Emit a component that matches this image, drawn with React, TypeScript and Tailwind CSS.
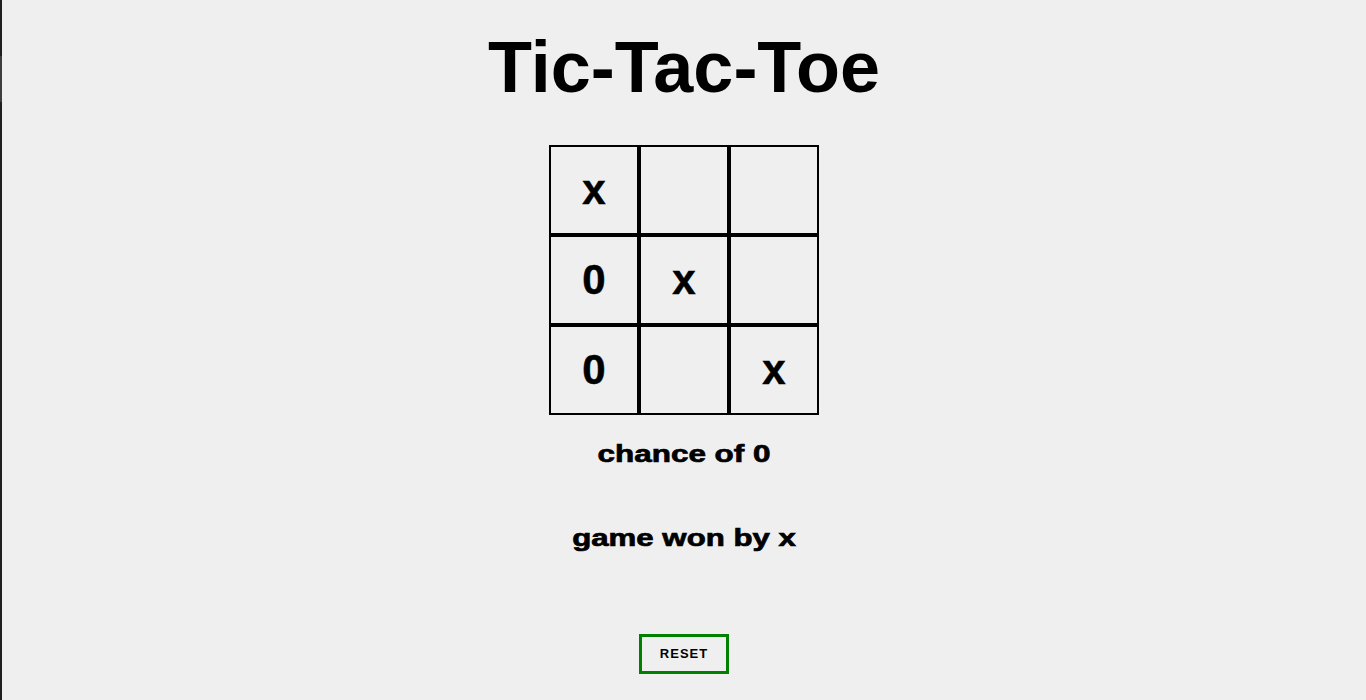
import { useState } from 'react';

type Mark = 'x' | '0' | '';

const initialBoard: Mark[] = ['x', '', '', '0', 'x', '', '0', '', 'x'];

export default function App() {
  const [board, setBoard] = useState<Mark[]>(initialBoard);

  const reset = () => setBoard(Array(9).fill('') as Mark[]);

  return (
    <div className="flex min-h-screen bg-[#efefef] font-['Liberation_Sans',Arial,sans-serif] text-black">
      {/* window edge */}
      <div className="flex w-[2px] shrink-0 flex-col bg-[#1f1f1f]">
        <div className="h-[56px]" />
        <div className="h-[46px] bg-[#3d3d3d]" />
      </div>

      <div className="flex flex-1 flex-col items-center">
        <h1 className="mt-[26px] text-[72px] font-bold leading-[83px]">Tic-Tac-Toe</h1>

        {/* Board */}
        <div className="mt-[36px] grid w-[270px] grid-cols-3">
          {board.map((cell, i) => (
            <button
              key={i}
              className="flex h-[90px] w-[90px] items-center justify-center border-2 border-black text-[42px] font-bold leading-none [-webkit-text-stroke:0.5px_black]"
            >
              {cell}
            </button>
          ))}
        </div>

        <h3 className="mt-[25px] text-[24px] font-bold leading-[28px] [-webkit-text-stroke:0.7px_black]">
          <span className="inline-block scale-x-[1.31]">chance of 0</span>
        </h3>

        <h3 className="mt-[56px] text-[24px] font-bold leading-[28px] [-webkit-text-stroke:0.7px_black]">
          <span className="inline-block scale-x-[1.3]">game won by x</span>
        </h3>

        <button
          onClick={reset}
          className="mt-[82px] h-[40px] w-[90px] border-[3px] border-[#008000] text-[13px] font-bold tracking-[1px]"
        >
          RESET
        </button>
      </div>
    </div>
  );
}
